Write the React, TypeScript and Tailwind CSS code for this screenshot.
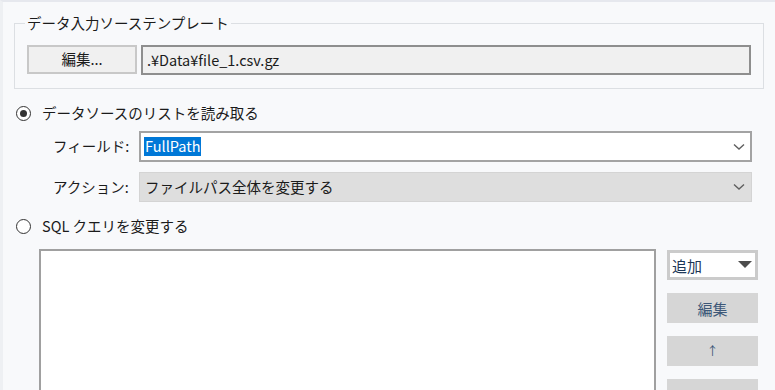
const font = { fontFamily: '"Noto Sans CJK JP", "Noto Sans", sans-serif' };

function Chevron() {
  return (
    <svg width="12" height="8" viewBox="0 0 12 8" className="shrink-0">
      <path d="M1 1.5 L6 6 L11 1.5" fill="none" stroke="#5f5f5f" strokeWidth="1.4" />
    </svg>
  );
}

function Radio({ checked }: { checked?: boolean }) {
  return (
    <span className="w-[15px] h-[15px] rounded-full border-[1.5px] border-[#333] bg-white flex items-center justify-center shrink-0">
      {checked && <span className="w-[7px] h-[7px] rounded-full bg-[#333]" />}
    </span>
  );
}

export default function App() {
  return (
    <div
      className="w-[775px] h-[390px] overflow-hidden bg-[#f8f9fb] border-t-2 border-[#e6e8ee] border-l-[3px] border-l-[#eef0f3] text-[14.5px] text-[#1b1b1b] leading-none"
      style={font}
    >
      <fieldset className="ml-[11px] mt-[11px] w-[750px] border border-[#dcdfe3] pl-[10px] pr-3 pb-[13px]">
        <legend className="px-[2px] leading-[20px]">データ入力ソーステンプレート</legend>
        <div className="ml-[2px] mt-[12px] flex gap-[4px]">
          <button className="w-[110px] h-[29px] bg-[#f0f0f0] border-2 border-[#c8c8c8] flex items-center justify-center">
            編集...
          </button>
          <div className="w-[610px] h-[30px] bg-[#f0f0f0] border-2 border-[#8e8e8e] flex items-center pl-[4px]">
            .¥Data¥file_1.csv.gz
          </div>
        </div>
      </fieldset>

      <div className="mt-[16px] ml-[13px] flex items-center gap-[11px] h-[16px]">
        <Radio checked />
        <span>データソースのリストを読み取る</span>
      </div>

      <div className="mt-[10px] ml-[50px] flex items-center">
        <span className="w-[86px]">フィールド:</span>
        <div className="w-[613px] h-[31px] bg-white border-2 border-[#a3a3a3] flex items-center justify-between pl-[3px] pr-[5px]">
          <span className="bg-[#0078d7] text-white px-[1px] h-[19px] flex items-center">FullPath</span>
          <Chevron />
        </div>
      </div>

      <div className="mt-[10px] ml-[50px] flex items-center">
        <span className="w-[86px]">アクション:</span>
        <div className="w-[613px] h-[30px] bg-[#dedede] border border-[#d4d4d4] flex items-center justify-between pl-[5px] pr-[6px]">
          <span>ファイルパス全体を変更する</span>
          <Chevron />
        </div>
      </div>

      <div className="mt-[16px] ml-[13px] flex items-center gap-[11px] h-[16px]">
        <Radio />
        <span>SQL クエリを変更する</span>
      </div>

      <div className="mt-[15px] ml-[36px] flex gap-[11px]">
        <div className="w-[617px] h-[160px] bg-white border-2 border-[#a0a0a0]" />
        <div className="flex flex-col gap-[13px] pt-[1px]">
          <div className="w-[91px] h-[30px] bg-white border-[3px] border-[#cbcbcb] flex items-center justify-between pl-[2px] pr-[3px] text-[#1c3657] text-[15px]">
            <span>追加</span>
            <svg width="14" height="8" viewBox="0 0 14 8">
              <path d="M0 0 H14 L7 7 Z" fill="#4d4d4d" />
            </svg>
          </div>
          <button className="w-[91px] h-[30px] bg-[#d6d6d6] flex items-center justify-center text-[#3d5878] text-[15px]">
            編集
          </button>
          <button className="w-[91px] h-[30px] bg-[#d6d6d6] flex items-center justify-center text-[#3d5878] text-[12px]">
            ↑
          </button>
          <button className="w-[91px] h-[30px] bg-[#d6d6d6]" />
        </div>
      </div>
    </div>
  );
}
